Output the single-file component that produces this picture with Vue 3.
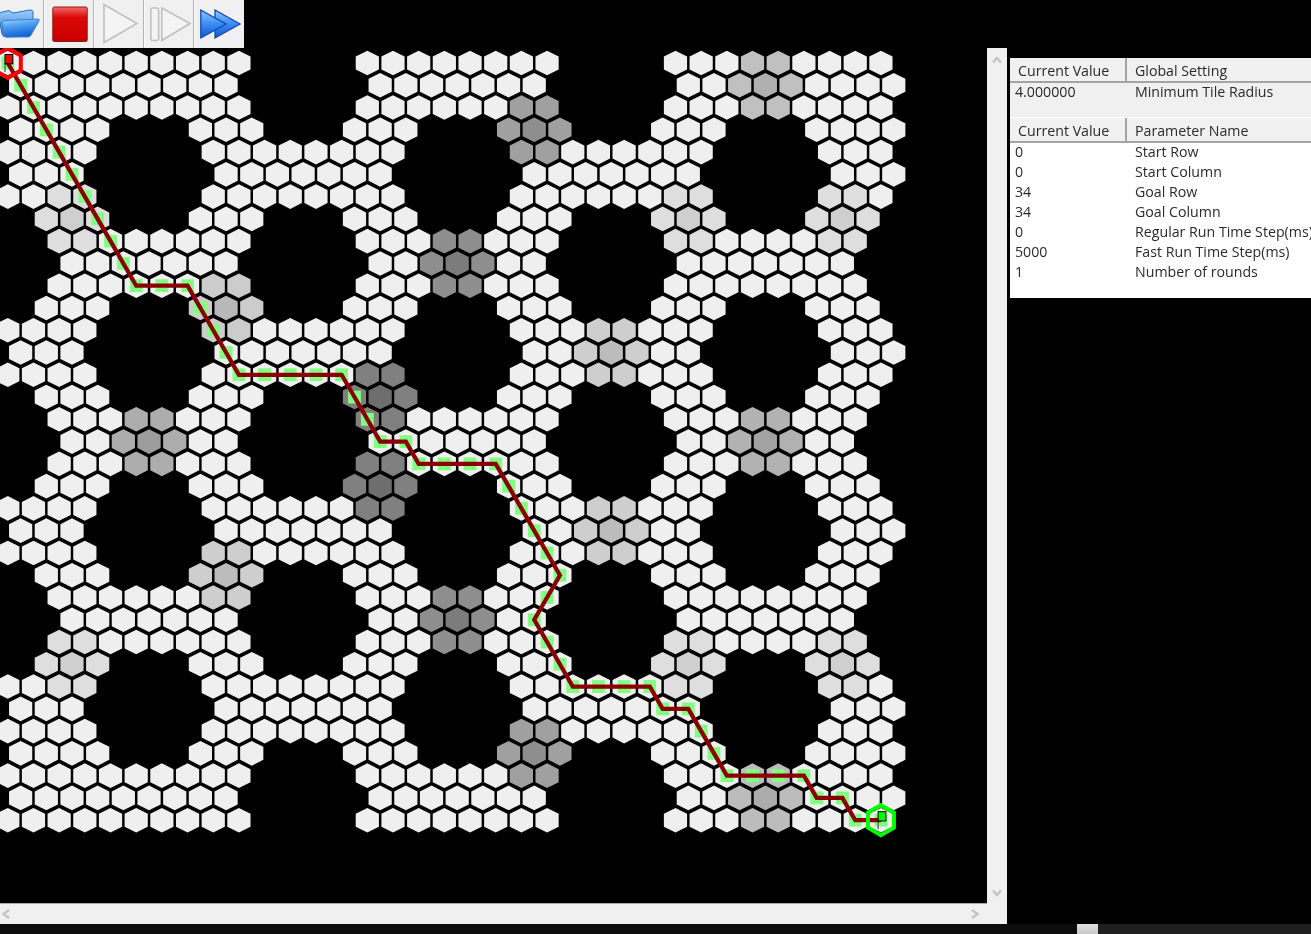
<template>
  <div class="app">
    <div class="workspace">
      <div class="canvas-col">
        <div class="toolbar">
          <button class="tool tool-first">
            <svg viewBox="0 0 44 48">
              <defs>
                <linearGradient id="folderBack" x1="0" y1="0" x2="0" y2="1">
                  <stop offset="0" stop-color="#9ccdfa" />
                  <stop offset="1" stop-color="#2a78d8" />
                </linearGradient>
                <linearGradient id="folderFront" x1="0" y1="0" x2="0.3" y2="1">
                  <stop offset="0" stop-color="#a8d6fc" />
                  <stop offset="0.45" stop-color="#4c9ef2" />
                  <stop offset="1" stop-color="#1464d0" />
                </linearGradient>
              </defs>
              <path d="M-2 13 L9 10.5 L13 13 L30 10 Q33 10 33 12 L33 20 L30 36 L6 37 Q3 37 2 34 Z" fill="url(#folderBack)" stroke="#2a6cc0" />
              <path d="M2 23 Q2 20.5 5 20.5 L37.5 19 Q40 19 39 21 L31 35 Q30 37 28 37 L7 37 Q4 37 3.5 34 Z" fill="url(#folderFront)" stroke="#3a80d4" />
            </svg>
          </button>
          <button class="tool">
            <svg viewBox="0 0 50 48">
              <defs>
                <linearGradient id="stopFill" x1="0" y1="0" x2="0" y2="1">
                  <stop offset="0" stop-color="#f46a6a" />
                  <stop offset="0.3" stop-color="#dc0808" />
                  <stop offset="1" stop-color="#c80000" />
                </linearGradient>
              </defs>
              <rect x="8.8" y="7" width="34.4" height="34.5" rx="1.5" fill="url(#stopFill)" stroke="#8c1818" />
            </svg>
          </button>
          <button class="tool">
            <svg viewBox="0 0 50 48">
              <path d="M10 4.5 L43 23.5 L10 42.5 Z" fill="#f4f4f4" stroke="#c0c0c0" stroke-width="1.6" />
            </svg>
          </button>
          <button class="tool">
            <svg viewBox="0 0 50 48">
              <rect x="6.8" y="8" width="7.8" height="32.5" rx="2" fill="#f4f4f4" stroke="#c0c0c0" stroke-width="1.6" />
              <path d="M17.8 8 L46 23.5 L17.8 40.5 Z" fill="#f4f4f4" stroke="#c0c0c0" stroke-width="1.6" />
            </svg>
          </button>
          <button class="tool tool-last">
            <svg viewBox="0 0 50 48">
              <defs>
                <linearGradient id="ffFill" x1="0" y1="0" x2="0" y2="1">
                  <stop offset="0" stop-color="#8cc8ff" />
                  <stop offset="0.5" stop-color="#3c8cf4" />
                  <stop offset="1" stop-color="#1058d0" />
                </linearGradient>
              </defs>
              <path d="M21 10 L46 24 L21 38 Z" fill="url(#ffFill)" stroke="#1048b0" stroke-width="1.3" />
              <path d="M6.8 10 L32 24 L6.8 38 Z" fill="url(#ffFill)" stroke="#1048b0" stroke-width="1.3" />
            </svg>
          </button>
        </div>

        <svg class="map" viewBox="0 48 987 855">
          <polygon
            v-for="t in tiles"
            :key="t.key"
            :points="hexPoints(t.x, t.y)"
            :fill="t.fill"
          />
          <rect
            v-for="p in pathPoints"
            :key="p.key"
            :x="p.x - 6.4"
            :y="p.y - 6.4"
            width="12.8"
            height="12.8"
            fill="#80ff80"
          />
          <polyline class="route" :points="routeLine" />
          <polygon class="marker" :points="markerPoints(startPt)" stroke="#ff0000" />
          <polygon class="marker" :points="markerPoints(goalPt)" stroke="#00ff00" />
          <path :d="flagPole(startPt)" stroke="#333" fill="none" />
          <rect :x="startPt.x - 2.8" :y="startPt.y - 8.5" width="7.8" height="9.3" fill="#ff0000" stroke="#000" />
          <path :d="flagPole(goalPt)" stroke="#333" fill="none" />
          <rect :x="goalPt.x - 2.8" :y="goalPt.y - 8.5" width="7.8" height="9.3" fill="#00ff00" stroke="#000" />
        </svg>

        <div class="hscroll">
          <svg class="chevron" viewBox="0 0 10 10"><path d="M8 1 L2.5 5 L8 9" /></svg>
          <svg class="chevron" viewBox="0 0 10 10"><path d="M2 1 L7.5 5 L2 9" /></svg>
        </div>
      </div>

      <div class="vscroll">
        <svg class="chevron" viewBox="0 0 10 10"><path d="M1 7.5 L5 3 L9 7.5" /></svg>
        <svg class="chevron" viewBox="0 0 10 10"><path d="M1 2.5 L5 7 L9 2.5" /></svg>
      </div>

      <div class="panel">
        <div class="head">
          <span class="head-value">Current Value</span>
          <span class="head-name">Global Setting</span>
        </div>
        <div class="global-rows">
          <div v-for="row in globalRows" :key="row.name" class="row">
            <span class="cell-value">{{ row.value }}</span>
            <span class="cell-name">{{ row.name }}</span>
          </div>
        </div>
        <div class="head">
          <span class="head-value">Current Value</span>
          <span class="head-name">Parameter Name</span>
        </div>
        <div class="param-rows">
          <div v-for="row in paramRows" :key="row.name" class="row">
            <span class="cell-value">{{ row.value }}</span>
            <span class="cell-name">{{ row.name }}</span>
          </div>
        </div>
      </div>
    </div>

    <div class="bottom-strip">
      <div class="strip-thumb"></div>
    </div>
  </div>
</template>

<script setup>
const X0 = 7.8
const DX = 25.68
const Y0 = 63
const DY = 22.27

const tileX = (r, c) => X0 + DX * c + (r % 2 ? DX / 2 : 0)
const tileY = (r) => Y0 + DY * r

// runs of [first, last] column per row type
const A = [[0, 9], [14, 21], [26, 34]]
const B = [[0, 8], [14, 20], [26, 34]]
const C = [[0, 3], [7, 9], [13, 15], [19, 21], [25, 27], [31, 34]]
const D = [[0, 3], [8, 15], [20, 27], [32, 34]]
const E = [[0, 2], [8, 14], [20, 26], [32, 34]]
const F = [[1, 3], [7, 9], [13, 15], [19, 21], [25, 27], [31, 33]]
const G = [[2, 9], [14, 21], [26, 33]]
const H = [[2, 8], [14, 20], [26, 32]]

const rows = [
  A, B, A, C, D, E, D, F, G, H, G, F, D, E, D, F, G, H,
  G, F, D, E, D, F, G, H, G, F, D, E, D, C, A, B, A
]

// obstacle clusters: row, column of the middle tile, middle shade, ring shade
const clusters = [
  [1, 29, '#b0b0b0', '#c0c0c0'],
  [3, 20, '#8e8e8e', '#a0a0a0'],
  [7, 2, '#cfcfcf', '#dedede'],
  [7, 26, '#cfcfcf', '#dedede'],
  [7, 32, '#cfcfcf', '#dedede'],
  [9, 17, '#7c7c7c', '#8e8e8e'],
  [11, 8, '#b8b8b8', '#cccccc'],
  [13, 23, '#bcbcbc', '#cecece'],
  [15, 14, '#6e6e6e', '#808080'],
  [17, 5, '#9c9c9c', '#adadad'],
  [17, 29, '#a2a2a2', '#b2b2b2'],
  [19, 14, '#6e6e6e', '#808080'],
  [21, 23, '#bcbcbc', '#cecece'],
  [23, 8, '#bcbcbc', '#cecece'],
  [25, 17, '#7c7c7c', '#8e8e8e'],
  [27, 2, '#cfcfcf', '#dedede'],
  [27, 26, '#cfcfcf', '#dedede'],
  [27, 32, '#cfcfcf', '#dedede'],
  [31, 20, '#8e8e8e', '#a0a0a0'],
  [33, 29, '#acacac', '#bcbcbc']
]

const shades = {}
clusters.forEach(([r, c, mid, ring]) => {
  shades[`${r}-${c}`] = mid
  shades[`${r}-${c - 1}`] = ring
  shades[`${r}-${c + 1}`] = ring
  const from = r % 2 ? c : c - 1
  for (const rr of [r - 1, r + 1]) {
    shades[`${rr}-${from}`] = ring
    shades[`${rr}-${from + 1}`] = ring
  }
})

const tiles = []
rows.forEach((runs, r) => {
  runs.forEach(([first, last]) => {
    for (let c = first; c <= last; c++) {
      const key = `${r}-${c}`
      tiles.push({ key, x: tileX(r, c), y: tileY(r), fill: shades[key] || '#efefef' })
    }
  })
})

const route = [
  [0, 0], [1, 0], [2, 1], [3, 1], [4, 2], [5, 2], [6, 3], [7, 3], [8, 4], [9, 4],
  [10, 5], [10, 6], [10, 7], [11, 7], [12, 8], [13, 8],
  [14, 9], [14, 10], [14, 11], [14, 12], [14, 13], [15, 13], [16, 14],
  [17, 14], [17, 15], [18, 16], [18, 17], [18, 18], [18, 19], [19, 19],
  [20, 20], [21, 20], [22, 21], [23, 21], [24, 21], [25, 20], [26, 21], [27, 21],
  [28, 22], [28, 23], [28, 24], [28, 25], [29, 25], [29, 26], [30, 27], [31, 27],
  [32, 28], [32, 29], [32, 30], [32, 31], [33, 31], [33, 32], [34, 33], [34, 34]
]

const pathPoints = route.map(([r, c]) => ({ key: `${r}-${c}`, x: tileX(r, c), y: tileY(r) }))
const routeLine = pathPoints.map((p) => `${p.x},${p.y}`).join(' ')
const startPt = pathPoints[0]
const goalPt = pathPoints[pathPoints.length - 1]

function hexPoints(x, y) {
  const w = 11.6
  const h = 12.3
  const s = 6.5
  return [
    [x, y - h], [x + w, y - s], [x + w, y + s],
    [x, y + h], [x - w, y + s], [x - w, y - s]
  ].map((p) => p.join(',')).join(' ')
}

function markerPoints(p) {
  const w = 13
  const h = 15
  const s = 7.5
  return [
    [p.x, p.y - h], [p.x + w, p.y - s], [p.x + w, p.y + s],
    [p.x, p.y + h], [p.x - w, p.y + s], [p.x - w, p.y - s]
  ].map((q) => q.join(',')).join(' ')
}

const flagPole = (p) => `M${p.x - 2.8} ${p.y} V${p.y + 9}`

const globalRows = [
  { value: '4.000000', name: 'Minimum Tile Radius' }
]

const paramRows = [
  { value: '0', name: 'Start Row' },
  { value: '0', name: 'Start Column' },
  { value: '34', name: 'Goal Row' },
  { value: '34', name: 'Goal Column' },
  { value: '0', name: 'Regular Run Time Step(ms)' },
  { value: '5000', name: 'Fast Run Time Step(ms)' },
  { value: '1', name: 'Number of rounds' }
]
</script>

<style scoped>
.app {
  width: 1311px;
  height: 934px;
  display: flex;
  flex-direction: column;
  overflow: hidden;
  background: #000;
  font-family: "Open Sans", "Noto Sans", sans-serif;
  font-size: 14.2px;
  color: #2a2a2a;
  filter: blur(0.3px);
}

.workspace {
  flex: 1;
  min-height: 0;
  display: flex;
}

.canvas-col {
  width: 987px;
  display: flex;
  flex-direction: column;
}

.toolbar {
  display: flex;
  width: 244px;
  height: 48px;
  background: #f0f0f0;
}

.tool {
  width: 50px;
  height: 48px;
  padding: 0;
  border: none;
  border-right: 1px solid #b4b4b4;
  border-left: 1px solid #fafafa;
  background: #f0f0f0;
  flex-shrink: 0;
}

.tool svg {
  display: block;
  width: 50px;
  height: 48px;
  margin-left: -1px;
  overflow: visible;
}

.tool-first {
  width: 44px;
  border-left: none;
}

.tool-first svg {
  width: 44px;
  margin-left: 0;
}

.tool-last {
  border-right: none;
}

.map {
  display: block;
  width: 987px;
  height: 855px;
  background: #000;
}

.route {
  fill: none;
  stroke: #8b0000;
  stroke-width: 4.2;
  stroke-linejoin: miter;
}

.marker {
  fill: none;
  stroke-width: 4;
}

.hscroll {
  height: 21px;
  background: #f0f0f0;
  border-top: 1px solid #a8a8a8;
  box-sizing: border-box;
  display: flex;
  align-items: center;
  justify-content: space-between;
  padding: 0 7px 0 1px;
}

.vscroll {
  width: 20px;
  margin-top: 48px;
  background: #f0f0f0;
  display: flex;
  flex-direction: column;
  align-items: center;
  justify-content: space-between;
  padding: 7px 0 26px;
  box-sizing: border-box;
}

.chevron {
  width: 10px;
  height: 10px;
  display: block;
}

.chevron path {
  fill: none;
  stroke: #c4c4c4;
  stroke-width: 2.4;
}

.panel {
  width: 301px;
  height: 240px;
  margin-top: 58px;
  margin-left: 3px;
  background: #fff;
  overflow: hidden;
  white-space: nowrap;
}

.head {
  height: 25px;
  box-sizing: border-box;
  display: flex;
  background: #f1f1f1;
  border-bottom: 2px solid #a4a4a4;
  line-height: 25px;
}

.head-value {
  width: 117px;
  padding-left: 8px;
  box-sizing: border-box;
  border-right: 2px solid #a4a4a4;
}

.head-name {
  padding-left: 8px;
}

.global-rows {
  height: 35px;
  background: #f0f0f0;
  border-bottom: 1px solid #fff;
  box-sizing: border-box;
}

.param-rows {
  background: #fff;
}

.row {
  display: flex;
  height: 20px;
  line-height: 18px;
}

.cell-value {
  flex-shrink: 0;
  width: 125px;
  padding-left: 5px;
  box-sizing: border-box;
}

.bottom-strip {
  height: 10px;
  display: flex;
  justify-content: flex-start;
  background: linear-gradient(to right, #0c0c0c 1098px, #1f1f1f 1098px);
}

.strip-thumb {
  width: 21px;
  margin-left: 1077px;
  background: linear-gradient(#e0e0e0, #c8c8c8);
}
</style>
